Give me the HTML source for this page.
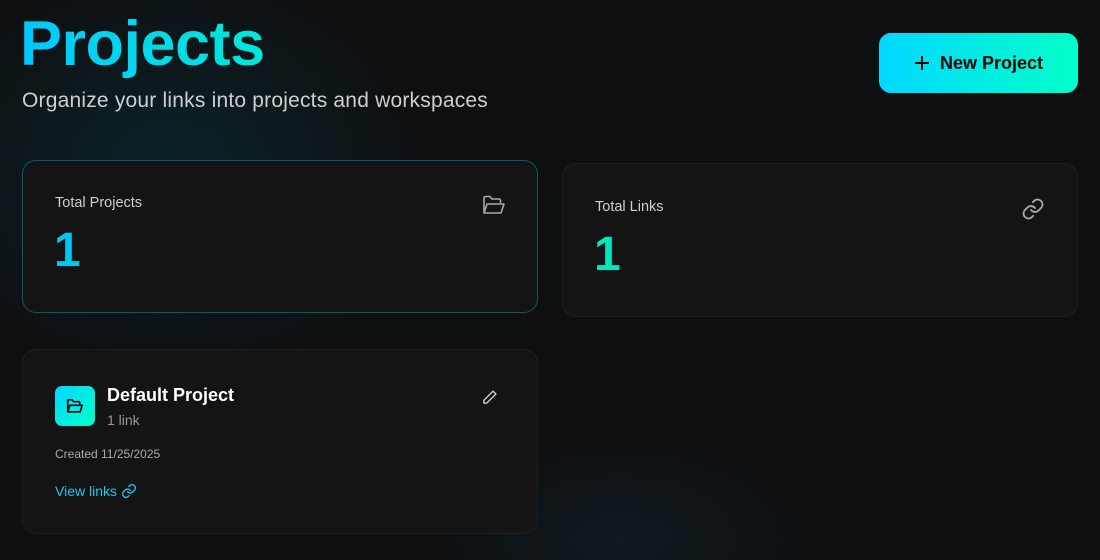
<!DOCTYPE html>
<html><head><style>
*{margin:0;padding:0;box-sizing:border-box}
body{width:1100px;height:560px;overflow:hidden;font-family:"Liberation Sans",sans-serif;background:#0e0f10;position:relative;
background-image:radial-gradient(ellipse 380px 300px at 170px 170px,rgba(0,110,140,.2),transparent 70%),radial-gradient(ellipse 300px 160px at 620px 540px,rgba(20,70,100,.18),transparent 70%);}
h1{position:absolute;left:20px;top:4px;font-size:63px;font-weight:700;letter-spacing:-.5px;background:linear-gradient(90deg,#00c8ff,#00e8d8);-webkit-background-clip:text;background-clip:text;color:transparent;line-height:80px}
.sub{position:absolute;left:22px;top:89px;font-size:21px;color:#cfcfcf;letter-spacing:.2px}
.btn{position:absolute;left:879px;top:33px;width:199px;height:60px;border-radius:12px;background:linear-gradient(90deg,#00d8ff,#00ffc8);color:#050505;font-weight:700;font-size:18px;display:flex;align-items:center;justify-content:center;gap:10px}
.card{position:absolute;border-radius:14px;background:#141414;border:1px solid #1f1f1f}
.lbl{position:absolute;font-size:14.5px;color:#cfcfcf}
.num{position:absolute;font-size:48px;font-weight:700}
</style></head><body>
<h1>Projects</h1>
<div class="sub">Organize your links into projects and workspaces</div>
<div class="btn"><svg width="16" height="16" viewBox="0 0 16 16"><path d="M8 1v14M1 8h14" stroke="#000" stroke-width="2"/></svg>New Project</div>

<div class="card" style="left:22px;top:160px;width:516px;height:153px;border-color:rgba(0,170,200,.45)">
<div class="lbl" style="left:32px;top:34px">Total Projects</div>
<svg style="position:absolute;left:459px;top:33px" width="24" height="22" viewBox="0 0 24 22" fill="none" stroke="#aaa" stroke-width="1.6" stroke-linejoin="round"><path d="M2 19V4a1.5 1.5 0 0 1 1.5-1.5H8l2 2.5h7a1.5 1.5 0 0 1 1.5 1.5V9"/><path d="M2 19l3-9h17l-3 9z"/></svg>
<div class="num" style="left:31px;top:62px;color:#00c8f0">1</div>
</div>

<div class="card" style="left:562px;top:163px;width:516px;height:154px">
<div class="lbl" style="left:32px;top:35px">Total Links</div>
<svg style="position:absolute;left:458px;top:33px" width="24" height="24" viewBox="0 0 24 24" fill="none" stroke="#aaa" stroke-width="1.8" stroke-linecap="round"><path d="M10 13a5 5 0 0 0 7.5.5l3-3a5 5 0 0 0-7-7l-1.7 1.7"/><path d="M14 11a5 5 0 0 0-7.5-.5l-3 3a5 5 0 0 0 7 7l1.7-1.7"/></svg>
<div class="num" style="left:31px;top:63px;color:#00e8c0">1</div>
</div>

<div class="card" style="left:22px;top:349px;width:516px;height:185px">
<div style="position:absolute;left:32px;top:36px;width:40px;height:40px;border-radius:7px;background:linear-gradient(135deg,#00d8ff,#00ffc8)">
<svg style="position:absolute;left:11px;top:12px" width="18" height="16" viewBox="0 0 24 22" fill="none" stroke="#000" stroke-width="2.2" stroke-linejoin="round"><path d="M2 19V4a1.5 1.5 0 0 1 1.5-1.5H8l2 2.5h7a1.5 1.5 0 0 1 1.5 1.5V9"/><path d="M2 19l3-9h17l-3 9z"/></svg></div>
<div style="position:absolute;left:84px;top:35px;font-size:18px;font-weight:700;color:#fff">Default Project</div>
<div style="position:absolute;left:84px;top:62px;font-size:14px;color:#999">1 link</div>
<svg style="position:absolute;left:458px;top:39px" width="17" height="17" viewBox="0 0 24 24" fill="none" stroke="#ccc" stroke-width="2" stroke-linejoin="round"><path d="M17 3l4 4L8 20H4v-4z"/></svg>
<div style="position:absolute;left:32px;top:97px;font-size:12px;color:#aaa">Created 11/25/2025</div>
<div style="position:absolute;left:32px;top:133px;font-size:14px;color:#1ec8f0;display:flex;align-items:center;gap:4px">View links <svg width="16" height="16" viewBox="0 0 24 24" fill="none" stroke="#1ec8f0" stroke-width="2" stroke-linecap="round"><path d="M10 13a5 5 0 0 0 7.5.5l3-3a5 5 0 0 0-7-7l-1.7 1.7"/><path d="M14 11a5 5 0 0 0-7.5-.5l-3 3a5 5 0 0 0 7 7l1.7-1.7"/></svg></div>
</div>
</body></html>
